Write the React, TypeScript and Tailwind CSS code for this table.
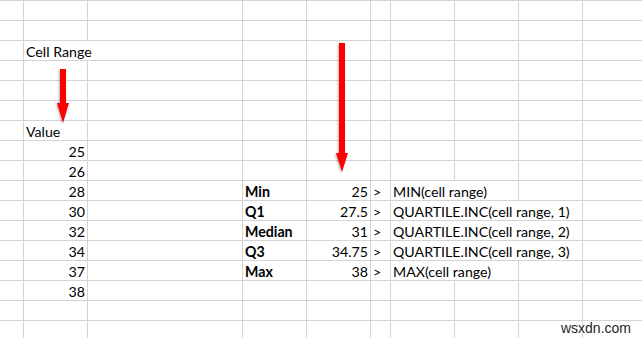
import React from 'react';

// column widths of the sheet (A..K); the left border of each column is the gridline
const COLS = [
  'w-[23px]',
  'w-[64px]',
  'w-[155px]',
  'w-[64px]',
  'w-[64px]',
  'w-[20px]',
  'w-[64px]',
  'w-[64px]',
  'w-[64px]',
  'flex-1',
];

type Cell = { text: string; align?: 'left' | 'right'; bold?: boolean };

interface Row {
  cells: Record<number, Cell>;
  hidden?: number[]; // columns whose left gridline is covered by overflowing text
}

const stats: [string, string, string, string][] = [
  ['28', 'Min', '25', 'MIN(cell range)'],
  ['30', 'Q1', '27.5', 'QUARTILE.INC(cell range, 1)'],
  ['32', 'Median', '31', 'QUARTILE.INC(cell range, 2)'],
  ['34', 'Q3', '34.75', 'QUARTILE.INC(cell range, 3)'],
  ['37', 'Max', '38', 'MAX(cell range)'],
];

const rows: Row[] = [
  { cells: {} },
  { cells: {} },
  { cells: { 1: { text: 'Cell Range' } }, hidden: [2] },
  { cells: {} },
  { cells: {} },
  { cells: {} },
  { cells: { 1: { text: 'Value' } } },
  { cells: { 1: { text: '25', align: 'right' } } },
  { cells: { 1: { text: '26', align: 'right' } } },
  ...stats.map(([v, label, num, formula]) => ({
    cells: {
      1: { text: v, align: 'right' as const },
      3: { text: label, bold: true },
      4: { text: num, align: 'right' as const },
      5: { text: '>' },
      6: { text: formula },
    },
    hidden: formula.startsWith('QUARTILE') ? [7, 8] : [7],
  })),
  { cells: { 1: { text: '38', align: 'right' } } },
  { cells: {} },
  { cells: {} },
];

function Arrows() {
  return (
    <svg
      className="absolute left-0 top-0 pointer-events-none drop-shadow-[-1px_1px_1px_rgba(0,0,0,0.3)]"
      width="642"
      height="338"
      viewBox="0 0 642 338"
    >
      <rect x="60" y="69" width="6" height="35" fill="#ff0000" />
      <polygon points="57,103 69,103 63,123" fill="#ff0000" />
      <rect x="339" y="43" width="6" height="111" fill="#ff0000" />
      <polygon points="336,153 348,153 342,172" fill="#ff0000" />
    </svg>
  );
}

export default function App() {
  return (
    <div className="relative w-[642px] h-[338px] overflow-hidden bg-white text-black text-[14.2px] font-['Lato',sans-serif]">
      {rows.map((row, r) => (
        <div key={r} className="flex h-5 border-t border-[#d4d4d4]">
          {COLS.map((w, c) => {
            const cell = row.cells[c];
            const line = c > 0 && !(row.hidden ?? []).includes(c);
            return (
              <div
                key={c}
                className={`${w} shrink-0 flex items-center leading-[19px] whitespace-nowrap ${
                  line ? 'border-l border-[#d4d4d4]' : ''
                } ${cell?.align === 'right' ? 'justify-end pr-[2px]' : 'pl-[2px]'}`}
              >
                {cell && (
                  <span className={`relative top-[1px] ${cell.bold ? 'font-bold' : ''}`}>{cell.text}</span>
                )}
              </div>
            );
          })}
        </div>
      ))}
      <Arrows />
      <div className="absolute right-[11px] bottom-[3px] text-[14px] leading-none text-[#1f1f1f] font-['Liberation_Sans',sans-serif] [text-shadow:0_0_2px_#fff]">
        wsxdn.com
      </div>
    </div>
  );
}
